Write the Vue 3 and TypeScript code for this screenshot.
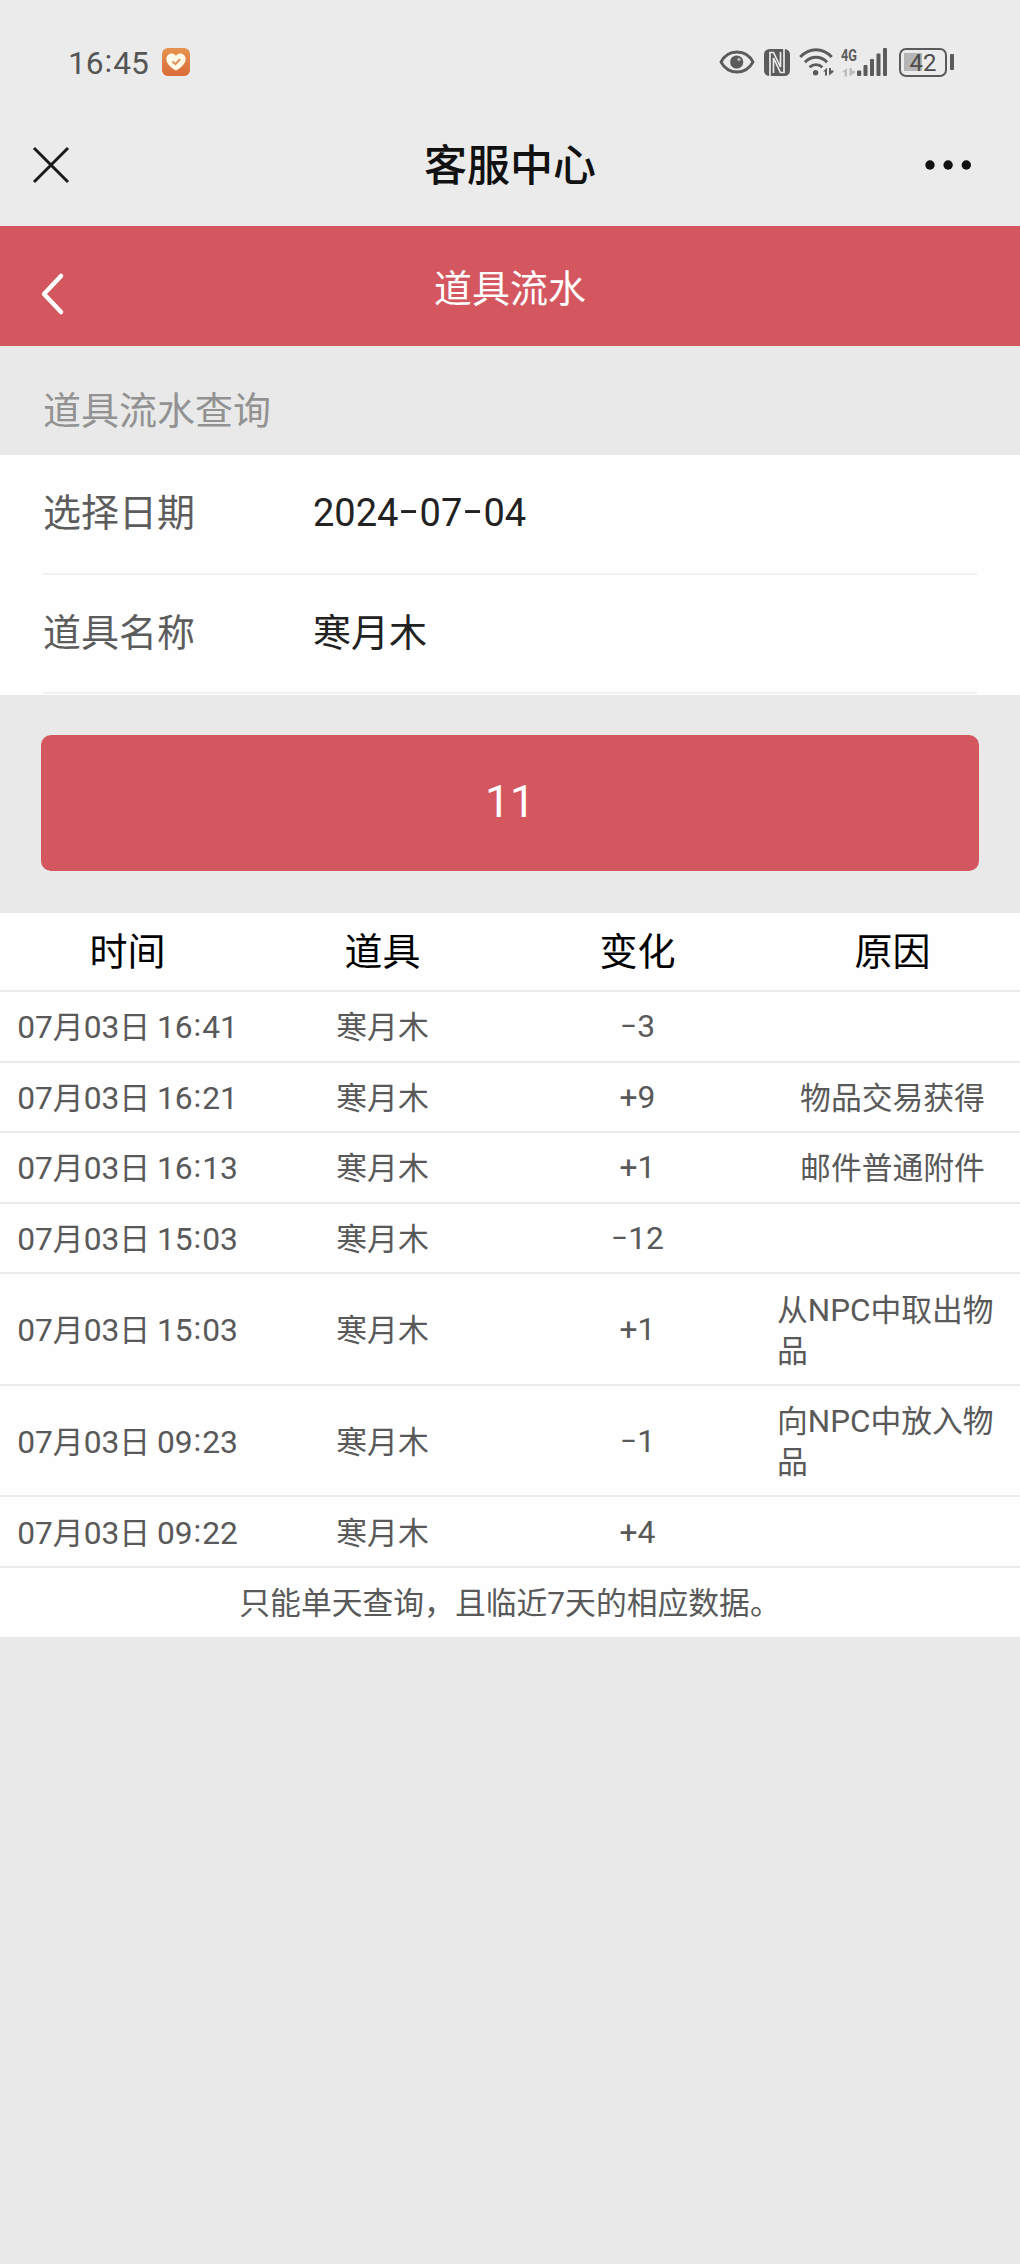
<script setup lang="ts">
import { h, type FunctionalComponent } from 'vue'

interface FlowRecord {
  time: string
  item: string
  change: string
  reason: string
}

const columns: string[] = ['时间', '道具', '变化', '原因']

const records: FlowRecord[] = [
  { time: '07月03日 16:41', item: '寒月木', change: '-3', reason: '' },
  { time: '07月03日 16:21', item: '寒月木', change: '+9', reason: '物品交易获得' },
  { time: '07月03日 16:13', item: '寒月木', change: '+1', reason: '邮件普通附件' },
  { time: '07月03日 15:03', item: '寒月木', change: '-12', reason: '' },
  { time: '07月03日 15:03', item: '寒月木', change: '+1', reason: '从NPC中取出物品' },
  { time: '07月03日 09:23', item: '寒月木', change: '-1', reason: '向NPC中放入物品' },
  { time: '07月03日 09:22', item: '寒月木', change: '+4', reason: '' },
]

// Sets digits, letters and dashes in their own face beside the Chinese text.
const MixedText: FunctionalComponent<{ text: string }> = (props) => {
  const runs = props.text.match(/-|:|[A-Z]+|[0-9+]+|[^-:A-Z0-9+]+/g) ?? []
  return h(
    'span',
    runs.map((run) => {
      if (run === '-') return h('span', { class: 'mt-dash' }, run)
      if (run === ':') return h('span', { class: 'mt-colon' }, run)
      if (/^[A-Z]/.test(run)) return h('span', { class: 'mt-latin' }, run)
      if (/^[0-9+]/.test(run)) return h('span', { class: 'mt-digits' }, run)
      return run
    }),
  )
}
MixedText.props = ['text']
</script>

<template>
  <div class="screen">
    <header class="status">
      <span class="clock"><MixedText text="16:45" /></span>
      <svg class="health" width="28" height="28" viewBox="0 0 28 28">
        <defs>
          <linearGradient id="hg" x1="0" y1="0" x2="0" y2="1">
            <stop offset="0" stop-color="#e5924f" />
            <stop offset="1" stop-color="#db6c3a" />
          </linearGradient>
        </defs>
        <rect width="28" height="28" rx="6" fill="url(#hg)" />
        <path d="M14 22.6C9 19.4 4.4 16 4.4 11.2C4.4 7.8 6.8 5.6 9.6 5.6C11.4 5.6 13 6.4 14 7.9C15 6.4 16.600 5.6 18.400 5.6C21.200 5.6 23.600 7.800 23.600 11.200C23.600 16 19 19.400 14 22.600Z" fill="#fff9e8" />
        <path d="M10.400 13.600L13.400 16.200L18 11.300" fill="none" stroke="#dd9255" stroke-width="2" />
      </svg>

      <div class="signals">
        <svg width="36" height="26" viewBox="0 0 36 26">
          <path d="M2 13C5.500 6.500 11.500 3 18 3C24.500 3 30.500 6.500 34 13C30.500 19.500 24.500 23 18 23C11.500 23 5.500 19.500 2 13Z" fill="none" stroke="#5b5b5b" stroke-width="2.800" stroke-linejoin="round" />
          <circle cx="17.700" cy="13" r="6.600" fill="#5b5b5b" />
          <circle cx="20" cy="10.500" r="1.700" fill="#b5b5b5" />
        </svg>
        <svg class="nfc" width="26" height="27" viewBox="0 0 26 27">
          <rect width="26" height="27" rx="5.500" fill="#5b5b5b" />
          <path d="M9.500 24V9L16.500 23.500H20V0M16.500 3V18L9.500 3.500H6V27" fill="none" stroke="#ebebeb" stroke-width="1.700" />
        </svg>
        <svg class="wifi" width="35" height="30" viewBox="0 0 35 30">
          <g fill="none" stroke="#5b5b5b" stroke-width="2.800">
            <path d="M1.200 10C10.500 0.300 23.500 0.300 32.800 10" />
            <path d="M5.900 15.200C12.300 8.600 21.700 8.600 28.100 15.200" />
            <path d="M10.600 20.300C14.400 16.600 19.600 16.600 23.400 20.300" />
          </g>
          <circle cx="16.600" cy="25.800" r="2.700" fill="#5b5b5b" />
          <path d="M24 24.500L28 20.800V28.500H26V24.500ZM30 21V28.500L34.500 25V23.600H32V21Z" fill="#5b5b5b" />
        </svg>
        <div class="cell">
          <div class="net">
            <span>4G</span>
            <svg width="15" height="10" viewBox="0 0 15 10">
              <path d="M1 5L6 1V9.500H3.500V5ZM8.500 1V9.500L14 5.500V4H11V1Z" fill="#bdbdbd" />
            </svg>
          </div>
          <svg width="31" height="30" viewBox="0 0 31 30">
            <g fill="#5b5b5b">
              <rect x="0" y="23.500" width="4.200" height="5.500" rx="1" />
              <rect x="6.500" y="18" width="4" height="11" rx="1" />
              <rect x="13" y="12" width="4" height="17" rx="1" />
              <rect x="19.500" y="6.500" width="4" height="22.500" rx="1" />
              <rect x="26" y="1" width="4" height="28" rx="1" />
            </g>
          </svg>
        </div>
        <div class="battery">
          <div class="shell"><span>42</span></div>
          <i></i>
        </div>
      </div>
    </header>

    <nav class="nav">
      <svg class="close" width="38" height="38" viewBox="0 0 38 38">
        <path d="M2 2L36 36M36 2L2 36" stroke="#1b1b1b" stroke-width="3" />
      </svg>
      <h1>客服中心</h1>
      <svg class="more" width="48" height="12" viewBox="0 0 48 12">
        <circle cx="6" cy="6" r="4.700" />
        <circle cx="24.100" cy="6" r="4.700" />
        <circle cx="42.300" cy="6" r="4.700" />
      </svg>
    </nav>

    <div class="titlebar">
      <svg class="back" width="26" height="44" viewBox="0 0 26 44">
        <path d="M22 4L5 22L22 40" fill="none" stroke="#fff" stroke-width="4.500" stroke-linecap="round" stroke-linejoin="round" />
      </svg>
      <h2>道具流水</h2>
    </div>

    <div class="section">道具流水查询</div>

    <form class="form" @submit.prevent>
      <div class="field">
        <label>选择日期</label>
        <div class="value"><MixedText text="2024-07-04" /></div>
      </div>
      <div class="field">
        <label>道具名称</label>
        <div class="value">寒月木</div>
      </div>
    </form>

    <div class="action">
      <button type="button"><MixedText text="11" /></button>
    </div>

    <section class="table">
      <div class="row head">
        <div v-for="c in columns" :key="c" class="td">{{ c }}</div>
      </div>
      <div v-for="(r, i) in records" :key="i" class="row">
        <div class="td"><MixedText :text="r.time" /></div>
        <div class="td"><span>{{ r.item }}</span></div>
        <div class="td change"><MixedText :text="r.change" /></div>
        <div class="td reason"><MixedText :text="r.reason" /></div>
      </div>
      <div class="note"><MixedText text="只能单天查询，且临近7天的相应数据。" /></div>
    </section>
  </div>
</template>

<style>
body {
  background: #e9e9e9;
}
.mt-digits,
.mt-colon,
.mt-latin,
.mt-dash {
  font-family: Roboto, sans-serif;
  font-size: 1.03em;
  font-weight: 400;
  line-height: 1;
}
.mt-colon {
  display: inline-block;
  width: 0.3em;
  text-align: center;
  transform: translateY(-0.05em);
}
.mt-latin {
  font-size: 1.02em;
}
.mt-dash {
  display: inline-block;
  width: 0.54em;
  text-align: center;
  transform: translateY(-0.07em) scaleX(1.6);
}
</style>

<style scoped>
.screen {
  width: 1020px;
  min-height: 2264px;
  background: #e9e9e9;
  font-family: 'Noto Sans CJK SC', sans-serif;
  box-sizing: border-box;
}
h1,
h2 {
  margin: 0;
}
.status {
  height: 124px;
  padding: 0 66px 0 68px;
  background: #ebebeb;
  display: flex;
  align-items: center;
  box-sizing: border-box;
}
.clock {
  font-size: 30.800px;
  width: 94px;
  color: #555;
  padding-bottom: 3px;
  white-space: nowrap;
}
.signals {
  margin-left: auto;
  display: flex;
  align-items: center;
}
.nfc {
  margin-left: 9px;
}
.wifi {
  margin-left: 9px;
}
.cell {
  margin-left: 7px;
  display: flex;
}
.net {
  width: 16px;
  height: 30px;
  display: flex;
  flex-direction: column;
  justify-content: space-between;
}
.net span {
  font: 700 17px/16px Roboto, sans-serif;
  transform: scaleX(0.75);
  transform-origin: left;
  color: #5b5b5b;
}
.battery {
  margin-left: 11px;
  display: flex;
  align-items: center;
  gap: 3px;
}
.shell {
  width: 48px;
  height: 29px;
  box-sizing: border-box;
  border: 2.5px solid #5b5b5b;
  border-radius: 7px;
  display: flex;
  align-items: center;
  justify-content: center;
  background: linear-gradient(90deg, #b5b5b5 18px, transparent 18px) 3px 3px / 100% 18px no-repeat;
}
.shell span {
  font: 400 24px/24px Roboto, sans-serif;
  color: #4c4c4c;
  padding-top: 1px;
}
.battery i {
  width: 4px;
  height: 16px;
  border-radius: 1px;
  background: #5b5b5b;
}
.nav {
  height: 102px;
  padding: 0 48px 20px 32px;
  box-sizing: border-box;
  background: #ebebeb;
  display: grid;
  grid-template-columns: 1fr auto 1fr;
  align-items: center;
}
.nav h1 {
  font-size: 43px;
  font-weight: 500;
  line-height: 60px;
  color: #111;
  padding: 0 16px 6px 0;
  margin-right: -32px;
}
.more {
  justify-self: end;
  fill: #111;
}
.titlebar {
  height: 120px;
  background: #d4575f;
  display: grid;
  grid-template-columns: 80px 1fr 80px;
  align-items: center;
}
.back {
  margin: 15px 0 0 39px;
}
.titlebar h2 {
  text-align: center;
  font-size: 38px;
  font-weight: 400;
  color: #fff;
  line-height: 56px;
}
.section {
  height: 109px;
  padding: 34px 43px 0;
  box-sizing: border-box;
  font-size: 38px;
  line-height: 56px;
  color: #929292;
}
.form {
  background: #fefefe;
  height: 240px;
  padding: 0 43px;
  box-sizing: border-box;
}
.field {
  height: 119.500px;
  box-sizing: border-box;
  padding-bottom: 8px;
  border-bottom: 2px solid #f1f1f1;
  display: flex;
  align-items: center;
  font-size: 38px;
}
label {
  width: 270px;
  color: #5c5c5c;
}
.value {
  color: #222;
}
.value :deep(.mt-digits) {
  font-size: 1em;
}
.action {
  padding: 40px 41px 42px;
}
.action button {
  display: block;
  width: 100%;
  height: 136px;
  padding: 0 0 10px;
  border: 0;
  border-radius: 10px;
  background: #d4575f;
  color: #fff;
  font-family: inherit;
  font-size: 43px;
}
.table {
  background: #fefefe;
  color: #595959;
  font-size: 30.800px;
}
.row {
  display: grid;
  grid-template-columns: repeat(4, 1fr);
  align-items: center;
  border-bottom: 2px solid #ebebeb;
  box-sizing: border-box;
  padding: 12.200px 0 15.400px;
  line-height: 41px;
}
.row.head {
  height: 79px;
  padding: 0 0 6px;
  font-size: 38px;
  color: #000;
}
.td {
  padding: 0 12px;
  display: flex;
  justify-content: center;
  white-space: nowrap;
}
.change {
  line-height: 39px;
  padding-bottom: 2px;
}
.reason {
  white-space: normal;
}
.note {
  height: 69px;
  line-height: 66px;
  text-align: center;
}
</style>
